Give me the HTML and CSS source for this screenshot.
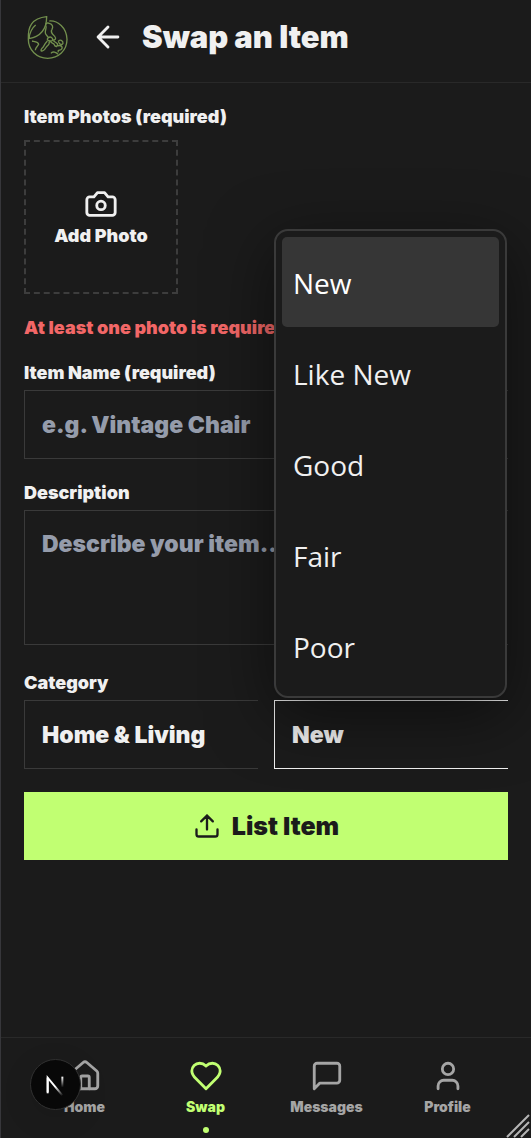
FILE: index.html
```html
<!DOCTYPE html>
<html lang="en">
<head>
<meta charset="utf-8">
<meta name="viewport" content="width=device-width, initial-scale=1">
<title>Swap an Item</title>
<link rel="stylesheet" href="styles.css">
</head>
<body>
<div class="app">
  <header class="header">
    <svg class="logo" viewBox="42 24 144 144" aria-hidden="true">
      <path d="M118 48C143 46 170 68 171 103C171 137 145 160 113 160C80 160 55 135 55 103C53 65 65 40 110 35C110 65 98 93 57 101M57 101C59 82 66 69 77 60"/>
      <path d="M107 61C107 54 113 53 118 55C128 58 130 65 126 73C120 81 127 87 134 94C140 101 136 105 128 105M107 61C112 69 104 75 106 84C107 90 113 93 115 98M115 98C109 103 112 108 121 108C128 110 131 101 124 97C120 95 118 96 115 98M112 108C106 114 103 119 99 127C94 131 91 137 95 138C101 139 106 131 109 126C115 119 121 117 117 110M122 109C122 116 132 113 134 121C138 129 145 121 142 116C137 111 132 111 130 105M145 109C149 102 160 107 159 115C157 121 148 119 145 109M143 123C151 119 160 125 155 132C151 138 142 132 145 142M123 145C128 137 139 143 144 148M66 108C76 110 85 110 86 118C83 125 76 126 76 136"/>
    </svg>
    <button class="back" type="button" aria-label="Back">
      <svg class="icon" viewBox="0 0 24 24"><path d="M12 19l-7-7 7-7M19 12H5"/></svg>
    </button>
    <h1 class="title">Swap an Item</h1>
  </header>

  <form class="form">
    <div class="photos">
      <span class="label" id="photos-label">Item Photos (required)</span>
      <button class="add-photo" type="button">
        <svg class="icon" viewBox="0 0 24 24"><path d="M14.500 4h-5L7 7H4a2 2 0 0 0-2 2v9a2 2 0 0 0 2 2h16a2 2 0 0 0 2-2V9a2 2 0 0 0-2-2h-3z"/><circle cx="12" cy="13" r="3"/></svg>
        Add Photo
      </button>
    </div>
    <p class="error">At least one photo is required</p>
    <div class="field">
      <label class="label" for="name">Item Name (required)</label>
      <input class="control" id="name" type="text" placeholder="e.g. Vintage Chair">
    </div>
    <div class="field">
      <label class="label" for="description">Description</label>
      <textarea class="control area" id="description" placeholder="Describe your item..."></textarea>
    </div>
    <div class="pair">
      <div class="field">
        <label class="label" for="category">Category</label>
        <select class="control" id="category"><option>Home &amp; Living</option></select>
      </div>
      <div class="field">
        <label class="label" for="condition">Condition</label>
        <div class="picker">
          <select class="control active" id="condition">
            <option>New</option><option>Like New</option><option>Good</option><option>Fair</option><option>Poor</option>
          </select>
          <div class="menu" role="listbox" aria-label="Condition">
            <button class="option selected" type="button" role="option" aria-selected="true">New</button>
            <button class="option" type="button" role="option" aria-selected="false">Like New</button>
            <button class="option" type="button" role="option" aria-selected="false">Good</button>
            <button class="option" type="button" role="option" aria-selected="false">Fair</button>
            <button class="option" type="button" role="option" aria-selected="false">Poor</button>
          </div>
        </div>
      </div>
    </div>
    <button class="submit" type="submit">
      <svg class="icon small" viewBox="0 0 24 24"><path d="M21 15v4a2 2 0 0 1-2 2H5a2 2 0 0 1-2-2v-4M17 8l-5-5-5 5M12 3v12"/></svg>
      List Item
    </button>
  </form>

  <nav class="nav">
    <a class="tab" href="#home">
      <svg class="icon" viewBox="0 0 24 24"><path d="M15 21v-8a1 1 0 0 0-1-1h-4a1 1 0 0 0-1 1v8"/><path d="M3 10a2 2 0 0 1 .709-1.528l7-6a2 2 0 0 1 2.582 0l7 6A2 2 0 0 1 21 10v9a2 2 0 0 1-2 2H5a2 2 0 0 1-2-2z"/></svg>
      Home
    </a>
    <a class="tab current" href="#swap">
      <svg class="icon" viewBox="0 0 24 24"><path d="M19 14c1.490-1.460 3-3.210 3-5.500A5.500 5.500 0 0 0 16.500 3c-1.760 0-3 .5-4.500 2-1.500-1.500-2.740-2-4.500-2A5.500 5.500 0 0 0 2 8.500c0 2.300 1.500 4.050 3 5.500l7 7z"/></svg>
      Swap
    </a>
    <a class="tab" href="#messages">
      <svg class="icon" viewBox="0 0 24 24"><path d="M21 15a2 2 0 0 1-2 2H7l-4 4V5a2 2 0 0 1 2-2h14a2 2 0 0 1 2 2z"/></svg>
      Messages
    </a>
    <a class="tab" href="#profile">
      <svg class="icon" viewBox="0 0 24 24"><path d="M19 21v-2a4 4 0 0 0-4-4H9a4 4 0 0 0-4 4v2"/><circle cx="12" cy="7" r="4"/></svg>
      Profile
    </a>
    <button class="dev-badge" type="button" aria-label="Developer tools">
      <svg viewBox="0 0 50 50">
        <defs>
          <linearGradient id="diagonal" x1="26" y1="26" x2="33" y2="36" gradientUnits="userSpaceOnUse"><stop stop-color="#fff"/><stop offset="1" stop-color="#fff" stop-opacity="0"/></linearGradient>
          <linearGradient id="stem" x1="0" y1="17" x2="0" y2="28" gradientUnits="userSpaceOnUse"><stop stop-color="#fff"/><stop offset="1" stop-color="#fff" stop-opacity="0"/></linearGradient>
        </defs>
        <path d="M17 33V18L32 36" fill="none" stroke="url(#diagonal)" stroke-width="2"/>
        <path d="M17 34V18" stroke="#fff" stroke-width="2"/>
        <path d="M31 17h2v12h-2z" fill="url(#stem)"/>
      </svg>
    </button>
    <svg class="grip" viewBox="0 0 24 24" aria-hidden="true"><path d="M1 23L23 1M8 23L23 8M15 23l8-8"/></svg>
  </nav>
</div>
</body>
</html>
```
FILE: styles.css
```css
* { box-sizing: border-box; }

body {
  margin: 0;
  background: #1b1b1b;
  color: #f0f0f0;
  font-family: Inter, "Liberation Sans", sans-serif;
  font-weight: 900;
}

button, input, select, textarea { font: inherit; color: inherit; }
button { padding: 0; border: 0; background: none; }

.app {
  display: flex;
  flex-direction: column;
  min-height: 100vh;
  border-left: 1px solid #37373b;
}

.header {
  display: flex;
  align-items: center;
  padding: 13px 23px 21px;
  border-bottom: 1px solid #292929;
}
.logo {
  width: 48px;
  height: 48px;
  fill: none;
  stroke: #728f4d;
  stroke-width: 4;
}
.back { display: flex; margin: 0 17px 0 19px; }
.title { margin: 0; font-size: 31px; line-height: 36px; font-weight: 900; }

.icon {
  width: 34px;
  height: 34px;
  fill: none;
  stroke: currentColor;
  stroke-width: 2;
  stroke-linecap: round;
  stroke-linejoin: round;
}
.small { width: 28px; height: 28px; }

.form {
  display: flex;
  flex-direction: column;
  flex: 1;
  gap: 23px;
  padding: 23px;
}
.label, .error { display: block; font-size: 18px; line-height: 22px; }
.error { margin: 0; color: #f26767; }
.photos { display: flex; flex-direction: column; gap: 12px; }
.add-photo {
  display: flex;
  flex-direction: column;
  align-items: center;
  justify-content: center;
  gap: 4px;
  width: 154px;
  height: 154px;
  border: 2px dashed #3d3d3d;
  font-size: 18px;
  line-height: 22px;
}

.field { display: flex; flex-direction: column; gap: 6px; min-width: 0; }
.control {
  display: block;
  width: 100%;
  height: 69px;
  margin: 0;
  padding: 0 17px;
  border: 1px solid #3a3a3a;
  border-right: 0;
  border-radius: 0;
  outline: 0;
  background: transparent;
  font-size: 23px;
  line-height: 32px;
  appearance: none;
}
.control::placeholder { color: #959cab; opacity: 1; }
.area { height: 135px; padding-top: 17px; resize: none; }
.active { border-color: #f0f0f0; }
.pair { display: grid; grid-template-columns: 1fr 1fr; gap: 16px; margin-top: 4px; }
.picker { position: relative; }

.menu {
  position: absolute;
  right: 1px;
  bottom: calc(100% + 2px);
  left: 0;
  display: flex;
  flex-direction: column;
  gap: 1px;
  padding: 6px 6px 5px;
  border: 2px solid #3a3a3a;
  border-radius: 14px;
  background: #1b1b1b;
  box-shadow: 0 16px 64px rgba(0, 0, 0, 0.5);
}
.option {
  height: 90px;
  padding: 2px 11px 0;
  border-radius: 5px;
  font-family: "Open Sans", "Noto Sans", sans-serif;
  font-size: 28px;
  font-weight: 500;
  text-align: left;
}
.selected { background: #363636; color: #fff; }

.submit {
  display: flex;
  align-items: center;
  justify-content: center;
  gap: 11px;
  height: 68px;
  background: #c1ff72;
  color: #1b1b1b;
  font-size: 25px;
}
.submit, .add-photo { cursor: pointer; }

.nav {
  position: relative;
  display: grid;
  grid-template-columns: repeat(4, 1fr);
  padding: 21px 23px 22px;
  border-top: 1px solid #292929;
}
.tab {
  position: relative;
  display: flex;
  flex-direction: column;
  align-items: center;
  gap: 4px;
  color: #a5a5a5;
  font-size: 14px;
  line-height: 19px;
  text-decoration: none;
}
.current { color: #c1ff72; }
.current::after {
  content: "";
  position: absolute;
  bottom: -17px;
  width: 6px;
  height: 6px;
  border-radius: 50%;
  background: #c1ff72;
}
.dev-badge {
  position: absolute;
  top: 21px;
  left: 29px;
  width: 51px;
  height: 51px;
  border: 1px solid #303030;
  border-radius: 50%;
  background: #080808;
  box-shadow: 0 8px 32px rgba(0, 0, 0, 0.1);
}
.dev-badge svg { display: block; }
.grip {
  position: absolute;
  right: 1px;
  bottom: 0;
  width: 24px;
  height: 24px;
  stroke: #b5b5b5;
  stroke-width: 2;
}
```
